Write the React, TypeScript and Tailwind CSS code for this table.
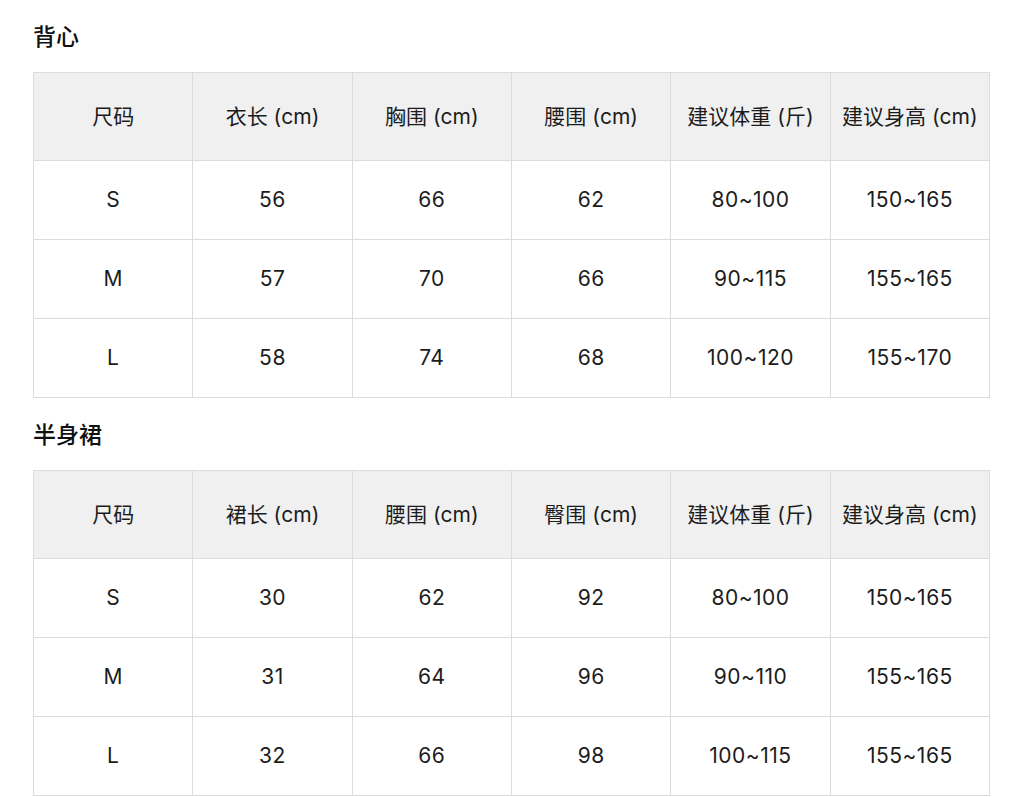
import React from "react";

type Table = {
  title: string;
  headers: string[];
  rows: string[][];
};

const tables: Table[] = [
  {
    title: "背心",
    headers: ["尺码", "衣长 (cm)", "胸围 (cm)", "腰围 (cm)", "建议体重 (斤)", "建议身高 (cm)"],
    rows: [
      ["S", "56", "66", "62", "80~100", "150~165"],
      ["M", "57", "70", "66", "90~115", "155~165"],
      ["L", "58", "74", "68", "100~120", "155~170"],
    ],
  },
  {
    title: "半身裙",
    headers: ["尺码", "裙长 (cm)", "腰围 (cm)", "臀围 (cm)", "建议体重 (斤)", "建议身高 (cm)"],
    rows: [
      ["S", "30", "62", "92", "80~100", "150~165"],
      ["M", "31", "64", "96", "90~110", "155~165"],
      ["L", "32", "66", "98", "100~115", "155~165"],
    ],
  },
];

const SizeTable = ({ table }: { table: Table }) => (
  <section>
    <h2 className="pt-[23px] pb-[21px] h-[72px] text-[23px] leading-[28px] font-medium text-[#111]">
      {table.title}
    </h2>
    <table className="w-[957px] table-fixed border-collapse text-[21px] text-[#1c1c1c]">
      <thead>
        <tr>
          {table.headers.map((h) => (
            <th
              key={h}
              className="h-[88px] border border-[#dcdcdc] bg-[#f0f0f0] text-center font-normal whitespace-nowrap"
            >
              {h}
            </th>
          ))}
        </tr>
      </thead>
      <tbody>
        {table.rows.map((row) => (
          <tr key={row[0]}>
            {row.map((cell, i) => (
              <td key={i} className="h-[79px] border border-[#dcdcdc] text-center tracking-[0.5px]">
                {cell}
              </td>
            ))}
          </tr>
        ))}
      </tbody>
    </table>
  </section>
);

export default function App() {
  return (
    <div
      className="min-h-screen bg-white pl-[33px]"
      style={{ fontFamily: 'Inter, "Noto Sans CJK SC", sans-serif' }}
    >
      {tables.map((t) => (
        <SizeTable key={t.title} table={t} />
      ))}
    </div>
  );
}
